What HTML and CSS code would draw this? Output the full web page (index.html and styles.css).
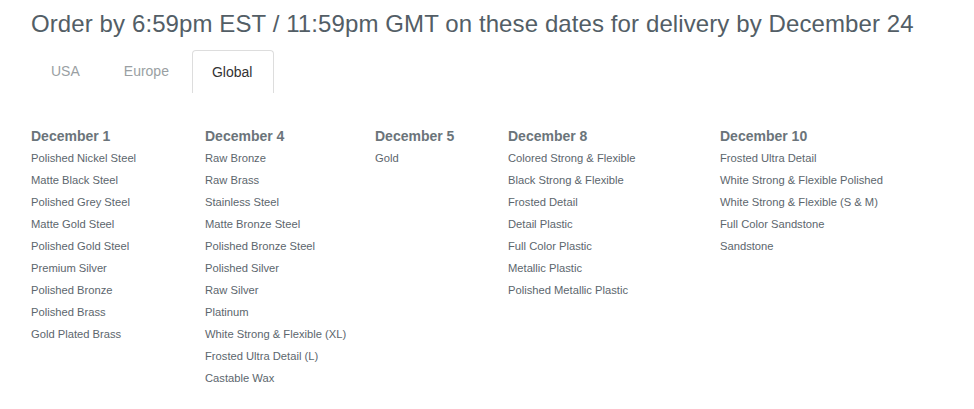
FILE: index.html
```html
<!DOCTYPE html>
<html>
<head>
<meta charset="utf-8">
<link rel="stylesheet" href="styles.css">
</head>
<body>
<div class="page">
  <h1 class="title">Order by 6:59pm EST / 11:59pm GMT on these dates for delivery by December 24</h1>
  <div class="tabs">
    <span class="tab">USA</span>
    <span class="tab">Europe</span>
    <span class="tab active">Global</span>
  </div>
  <div class="cols">
    <div class="col">
      <h3 class="date">December 1</h3>
      <ul class="list">
        <li>Polished Nickel Steel</li>
        <li>Matte Black Steel</li>
        <li>Polished Grey Steel</li>
        <li>Matte Gold Steel</li>
        <li>Polished Gold Steel</li>
        <li>Premium Silver</li>
        <li>Polished Bronze</li>
        <li>Polished Brass</li>
        <li>Gold Plated Brass</li>
      </ul>
    </div>
    <div class="col">
      <h3 class="date">December 4</h3>
      <ul class="list">
        <li>Raw Bronze</li>
        <li>Raw Brass</li>
        <li>Stainless Steel</li>
        <li>Matte Bronze Steel</li>
        <li>Polished Bronze Steel</li>
        <li>Polished Silver</li>
        <li>Raw Silver</li>
        <li>Platinum</li>
        <li>White Strong &amp; Flexible (XL)</li>
        <li>Frosted Ultra Detail (L)</li>
        <li>Castable Wax</li>
      </ul>
    </div>
    <div class="col">
      <h3 class="date">December 5</h3>
      <ul class="list">
        <li>Gold</li>
      </ul>
    </div>
    <div class="col">
      <h3 class="date">December 8</h3>
      <ul class="list">
        <li>Colored Strong &amp; Flexible</li>
        <li>Black Strong &amp; Flexible</li>
        <li>Frosted Detail</li>
        <li>Detail Plastic</li>
        <li>Full Color Plastic</li>
        <li>Metallic Plastic</li>
        <li>Polished Metallic Plastic</li>
      </ul>
    </div>
    <div class="col">
      <h3 class="date">December 10</h3>
      <ul class="list">
        <li>Frosted Ultra Detail</li>
        <li>White Strong &amp; Flexible Polished</li>
        <li>White Strong &amp; Flexible (S &amp; M)</li>
        <li>Full Color Sandstone</li>
        <li>Sandstone</li>
      </ul>
    </div>
  </div>
</div>
</body>
</html>
```
FILE: styles.css
```css
* { box-sizing: border-box; }
html, body { margin: 0; padding: 0; background: #fff; }
body { font-family: "Liberation Sans", Arial, sans-serif; }
.page { padding: 10px 0 0 31px; }
.title {
  margin: 0;
  font-size: 24px;
  line-height: 28px;
  font-weight: 300;
  color: #535e66;
  letter-spacing: 0.1px;
}
.tabs {
  display: flex;
  margin-top: 12px;
  height: 43px;
}
.tab {
  font-size: 14px;
  color: #9a9fa3;
  padding: 0 21px;
  margin-right: 2px;
  line-height: 43px;
}
.tab:first-child { padding-left: 20px; }
.tab.active {
  color: #333;
  border: 1px solid #ddd;
  border-bottom: none;
  border-radius: 4px 4px 0 0;
  padding: 0 21px 0 19px;
}
.cols {
  display: grid;
  grid-template-columns: 174px 170px 133px 212px auto;
  margin-top: 35px;
}
.date {
  margin: 0 0 2px;
  font-size: 14px;
  line-height: 17px;
  font-weight: bold;
  color: #6b747a;
}
.list {
  list-style: none;
  margin: 0;
  padding: 0;
}
.list li {
  font-size: 11.2px;
  line-height: 22px;
  color: #5c666d;
}
```
